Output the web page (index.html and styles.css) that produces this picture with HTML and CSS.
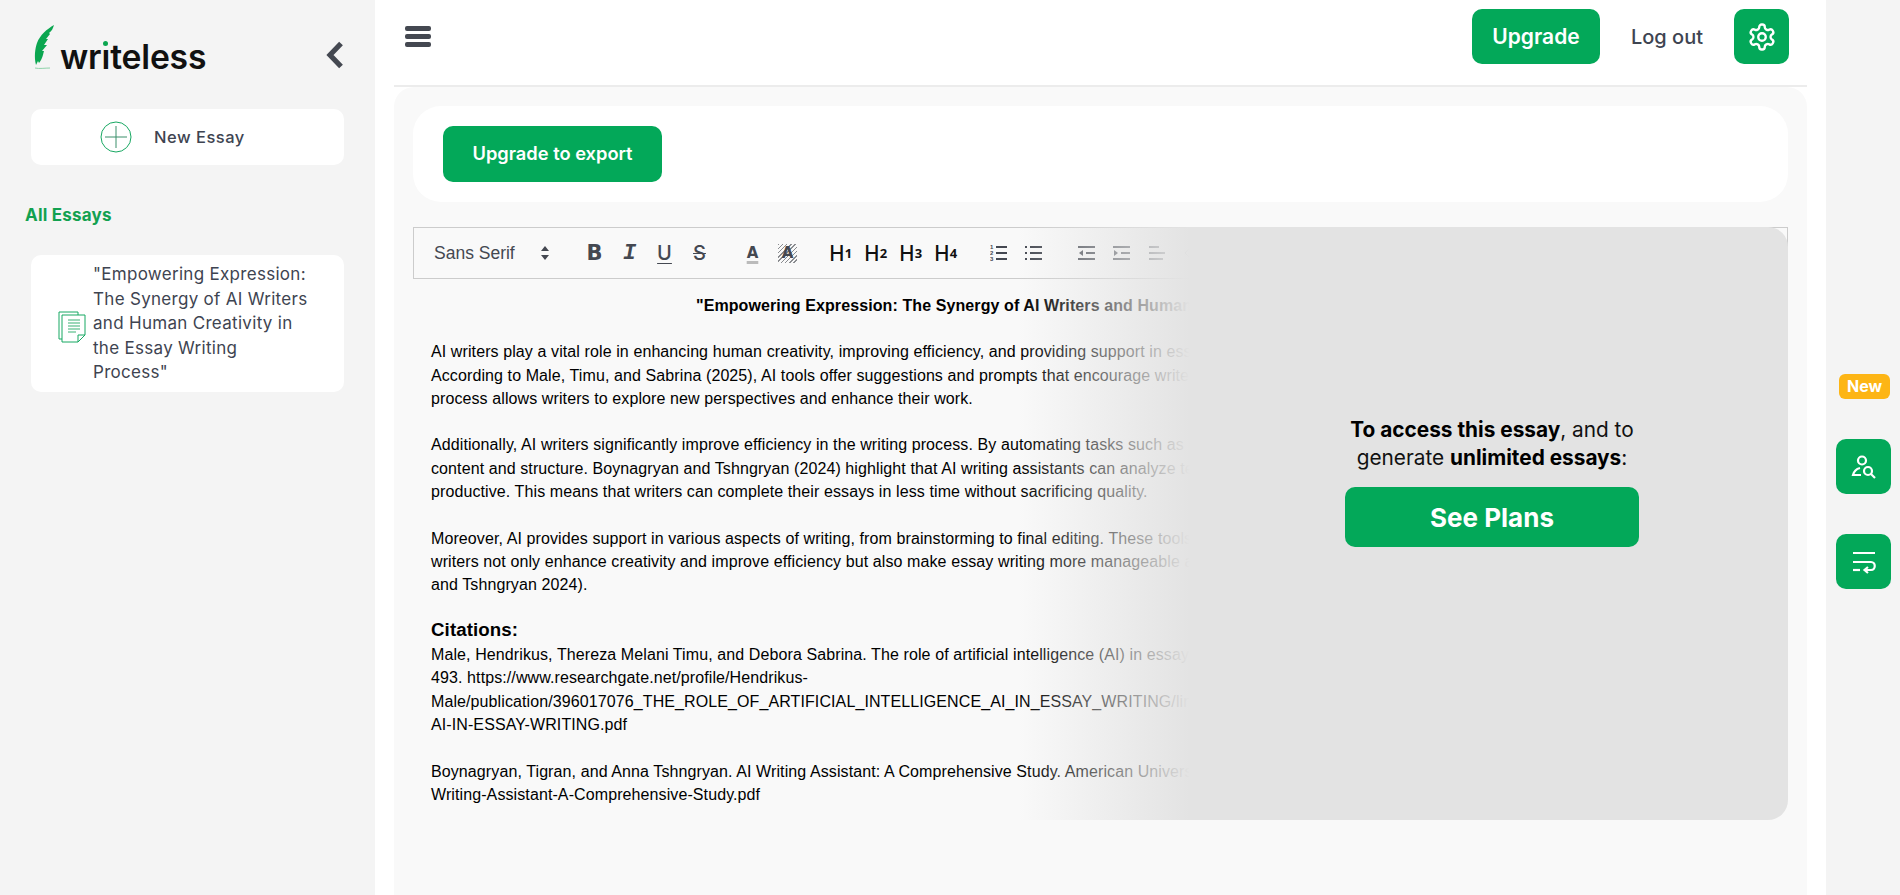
FILE: index.html
```html
<!DOCTYPE html>
<html lang="en">
<head>
  <meta charset="UTF-8">
  <title>Writeless</title>
  <link rel="stylesheet" href="styles.css">
</head>
<body>
  <aside class="sidebar">
    <div class="brand">
      <svg class="quill" viewBox="0 0 22 46" aria-hidden="true">
        <path d="M21 1C14 5 7 11 4 19C2 25 1 33 3 41L5 37L6 39C10 34 10 30 11 27L9 27L14 21L11 21L15 15L13 15L17 10L16 9C19 7 20 4 21 1Z" fill="#0ba650"/>
        <path d="M2 44C6 45 12 44 17 44" fill="none" stroke="#8fd3aa" stroke-width="1"/>
      </svg>
      <span class="wordmark">wr<span class="dot-i">ı</span>teless</span>
      <svg class="collapse" viewBox="0 0 18 26" aria-hidden="true">
        <path d="M15 1.5L4 13L15 24.5" fill="none" stroke="#444851" stroke-width="5.2"/>
      </svg>
    </div>

    <a class="new-essay">
      <svg class="plus" viewBox="0 0 32 32" aria-hidden="true">
        <circle cx="16" cy="16" r="15" fill="none" stroke="#17a862" stroke-width="1"/>
        <path d="M16 5V27M5 16H27" stroke="#3b8f6a" stroke-width="1"/>
      </svg>
      <span>New Essay</span>
    </a>

    <h3 class="all-essays">All Essays</h3>

    <a class="essay-item">
      <svg class="doc" viewBox="0 0 28 32" aria-hidden="true">
        <path d="M4 28H1V1H20V4" fill="none" stroke="#17a862" stroke-width="1"/>
        <path d="M4 4H27V24L20 31H4Z" fill="none" stroke="#17a862" stroke-width="1"/>
        <path d="M20 31V24H27" fill="none" stroke="#17a862" stroke-width="1"/>
        <path d="M10 9H22M10 12H22M10 15H22M10 18H22M10 21H18" stroke="#7ccca2" stroke-width="1.6"/>
      </svg>
      <span>"Empowering Expression: The Synergy of AI Writers and Human Creativity in the Essay Writing Process"</span>
    </a>
  </aside>

  <main class="main">
    <header class="topbar">
      <div class="burger"><i></i><i></i><i></i></div>
      <div class="top-actions">
        <a class="btn btn-upgrade">Upgrade</a>
        <a class="logout">Log out</a>
        <a class="btn btn-icon">
          <svg viewBox="0 0 24 24" width="30" height="30" fill="none" stroke="#fff" stroke-width="1.9">
            <path d="M12.22 2h-.44a2 2 0 0 0-2 2v.18a2 2 0 0 1-1 1.73l-.43.25a2 2 0 0 1-2 0l-.15-.08a2 2 0 0 0-2.73.73l-.22.38a2 2 0 0 0 .73 2.73l.15.1a2 2 0 0 1 1 1.72v.51a2 2 0 0 1-1 1.74l-.15.09a2 2 0 0 0-.73 2.73l.22.38a2 2 0 0 0 2.73.73l.15-.08a2 2 0 0 1 2 0l.43.25a2 2 0 0 1 1 1.73V20a2 2 0 0 0 2 2h.44a2 2 0 0 0 2-2v-.18a2 2 0 0 1 1-1.73l.43-.25a2 2 0 0 1 2 0l.15.08a2 2 0 0 0 2.73-.73l.22-.39a2 2 0 0 0-.73-2.73l-.15-.08a2 2 0 0 1-1-1.74v-.5a2 2 0 0 1 1-1.74l.15-.09a2 2 0 0 0 .73-2.73l-.22-.38a2 2 0 0 0-2.73-.73l-.15.08a2 2 0 0 1-2 0l-.43-.25a2 2 0 0 1-1-1.73V4a2 2 0 0 0-2-2z"/>
            <circle cx="12" cy="12" r="3"/>
          </svg>
        </a>
      </div>
    </header>

    <section class="panel">
      <div class="export-card">
        <a class="btn btn-export">Upgrade to export</a>
      </div>

      <div class="editor">
        <div class="toolbar">
          <div class="picker">
            <span>Sans Serif</span>
            <svg viewBox="0 0 10 16" width="10" height="16" aria-hidden="true">
              <path d="M5 1L9 6H1ZM5 15L1 10H9Z" fill="#444851"/>
            </svg>
          </div>
          <div class="tool-group">
            <span class="tool t-bold">B</span>
            <span class="tool t-italic">I</span>
            <span class="tool t-under">U</span>
            <span class="tool t-strike">S</span>
          </div>
          <div class="tool-group">
            <span class="tool t-color">A</span>
            <span class="tool t-bg"><em>A</em></span>
          </div>
          <div class="tool-group">
            <span class="tool t-head">H<sub>1</sub></span>
            <span class="tool t-head">H<sub>2</sub></span>
            <span class="tool t-head">H<sub>3</sub></span>
            <span class="tool t-head">H<sub>4</sub></span>
          </div>
          <div class="tool-group">
            <span class="tool">
              <svg viewBox="0 0 18 18" width="18" height="18">
                <path d="M6 3H17M6 9H17M6 15H17" stroke="#444851" stroke-width="2"/>
                <text x="0" y="5" class="num">1</text>
                <text x="0" y="11" class="num">2</text>
                <text x="0" y="17" class="num">3</text>
              </svg>
            </span>
            <span class="tool">
              <svg viewBox="0 0 18 18" width="18" height="18">
                <path d="M5 3H17M5 9H17M5 15H17" stroke="#444851" stroke-width="2"/>
                <path d="M0 3H2M0 9H2M0 15H2" stroke="#444851" stroke-width="2"/>
              </svg>
            </span>
          </div>
          <div class="tool-group">
            <span class="tool">
              <svg viewBox="0 0 18 18" width="18" height="18">
                <path d="M0 3H17M8 9H17M0 15H17" stroke="#444851" stroke-width="2"/>
                <path d="M5 6V12L1 9Z" fill="#444851"/>
              </svg>
            </span>
            <span class="tool">
              <svg viewBox="0 0 18 18" width="18" height="18">
                <path d="M0 3H17M8 9H17M0 15H17" stroke="#444851" stroke-width="2"/>
                <path d="M1 6V12L5 9Z" fill="#444851"/>
              </svg>
            </span>
            <span class="tool">
              <svg viewBox="0 0 18 18" width="18" height="18">
                <path d="M1 3H11M1 9H17M1 15H15" stroke="#444851" stroke-width="2"/>
              </svg>
            </span>
            <span class="tool">
              <svg viewBox="0 0 18 18" width="18" height="18">
                <path d="M6 5L2 9L6 13M12 5L16 9L12 13" fill="none" stroke="#444851" stroke-width="1"/>
              </svg>
            </span>
          </div>
        </div>

        <div class="doc-body">
          <h4 class="doc-title">"Empowering Expression: The Synergy of AI Writers and Human Creativity in the Essay Writing Process"</h4>
          <p>AI writers play a vital role in enhancing human creativity, improving efficiency, and providing support in essay writing.<br>
          According to Male, Timu, and Sabrina (2025), AI tools offer suggestions and prompts that encourage writers to think.<br>
          process allows writers to explore new perspectives and enhance their work.</p>
          <p>Additionally, AI writers significantly improve efficiency in the writing process. By automating tasks such as grammar checks,<br>
          content and structure. Boynagryan and Tshngryan (2024) highlight that AI writing assistants can analyze text quickly.<br>
          productive. This means that writers can complete their essays in less time without sacrificing quality.</p>
          <p class="last-para">Moreover, AI provides support in various aspects of writing, from brainstorming to final editing. These tools help writers.<br>
          writers not only enhance creativity and improve efficiency but also make essay writing more manageable and effective.<br>
          and Tshngryan 2024).</p>
          <h5 class="citations">Citations:</h5>
          <p>Male, Hendrikus, Thereza Melani Timu, and Debora Sabrina. The role of artificial intelligence (AI) in essay writing.<br>
          493. https://www.researchgate.net/profile/Hendrikus-<br>
          Male/publication/396017076_THE_ROLE_OF_ARTIFICIAL_INTELLIGENCE_AI_IN_ESSAY_WRITING/links/THE-ROLE<br>
          AI-IN-ESSAY-WRITING.pdf</p>
          <p>Boynagryan, Tigran, and Anna Tshngryan. AI Writing Assistant: A Comprehensive Study. American University of Armenia.<br>
          Writing-Assistant-A-Comprehensive-Study.pdf</p>
        </div>

        <div class="paywall">
          <div class="paywall-box">
            <p>
              <strong>To access this essay</strong>, and to<br>
              generate <strong>unlimited essays</strong>:
            </p>
            <a class="btn btn-plans">See Plans</a>
          </div>
        </div>
      </div>
    </section>
  </main>

  <aside class="rail">
    <span class="badge-new">New</span>
    <a class="btn btn-icon">
      <svg viewBox="0 0 26 26" width="26" height="26" fill="none" stroke="#fff" stroke-width="2.2">
        <circle cx="11" cy="6.5" r="4"/>
        <path d="M9 14C5 15 3 17 2 21H10"/>
        <circle cx="17" cy="17" r="4"/>
        <path d="M20 20L24 24"/>
      </svg>
    </a>
    <a class="btn btn-icon">
      <svg viewBox="0 0 26 26" width="26" height="26" fill="none" stroke="#fff" stroke-width="2.2">
        <path d="M2 4H24M2 13H20C25 13 25 21 20 21H14"/>
        <path d="M17 18L13.5 21L17 24"/>
        <path d="M2 21H9"/>
      </svg>
    </a>
  </aside>
</body>
</html>
```

FILE: styles.css
```css
* {
  box-sizing: border-box;
}

html, body {
  height: 100%;
}

body {
  margin: 0;
  display: flex;
  height: 895px;
  overflow: hidden;
  background: #fff;
  color: #3e4451;
  font-family: "Inter", "Noto Sans", sans-serif;
}

a {
  text-decoration: none;
}

/* left column */
.sidebar {
  width: 375px;
  flex: none;
  background: #f4f4f4;
  padding: 24px 31px 0 31px;
}

.brand {
  display: flex;
  align-items: flex-start;
  height: 85px;
}

.quill {
  width: 22px;
  height: 46px;
  flex: none;
  margin-left: 2px;
}

.wordmark {
  margin-left: 5px;
  margin-top: 13px;
  font-size: 33.7px;
  line-height: 40px;
  font-weight: 600;
  color: #111;
  letter-spacing: -0.2px;
}

.dot-i {
  position: relative;
}

.dot-i::after {
  content: "";
  position: absolute;
  left: 50%;
  top: 5px;
  width: 5px;
  height: 5px;
  margin-left: -2.5px;
  border-radius: 50%;
  background: #0ba650;
}

.collapse {
  width: 18px;
  height: 26px;
  margin-left: auto;
  margin-top: 18px;
  overflow: visible;
}

.new-essay {
  display: flex;
  align-items: center;
  gap: 22px;
  height: 56px;
  padding-left: 69px;
  border-radius: 10px;
  background: #fff;
  font-size: 16.5px;
  font-weight: 500;
  letter-spacing: 0.5px;
  color: #3e4451;
}

.plus {
  width: 32px;
  height: 32px;
}

.all-essays {
  margin: 38px 0 0 -6px;
  height: 52px;
  font-size: 17px;
  line-height: 24px;
  font-weight: 700;
  letter-spacing: 0.2px;
  color: #12a150;
}

.essay-item {
  display: flex;
  align-items: center;
  gap: 7px;
  height: 137px;
  padding: 0 33px 0 27px;
  border-radius: 10px;
  background: #fff;
  font-size: 17px;
  line-height: 24.5px;
  letter-spacing: 0.3px;
  color: #3e4451;
}

.doc {
  width: 28px;
  height: 32px;
  flex: none;
  margin-top: 6px;
}

/* middle column */
.main {
  flex: 1;
  min-width: 0;
  padding: 0 19px;
  display: flex;
  flex-direction: column;
}

.topbar {
  height: 87px;
  flex: none;
  border-bottom: 2px solid #ececec;
  display: flex;
  align-items: flex-start;
  justify-content: space-between;
}

.burger {
  margin: 26px 0 0 11px;
  width: 26px;
}

.burger i {
  display: block;
  height: 5px;
  margin-bottom: 3px;
  border-radius: 2px;
  background: #444851;
}

.top-actions {
  display: flex;
  align-items: center;
  margin: 9px 18px 0 0;
}

.btn {
  display: flex;
  align-items: center;
  justify-content: center;
  border-radius: 10px;
  background: #03a859;
  color: #fff;
  font-weight: 600;
}

.btn-upgrade {
  width: 128px;
  height: 55px;
  font-size: 21px;
}

.logout {
  width: 134px;
  text-align: center;
  font-size: 20px;
  font-weight: 500;
  color: #3e4451;
}

.btn-icon {
  width: 55px;
  height: 55px;
}

.panel {
  flex: 1;
  background: #f9f9f9;
  border-radius: 20px 20px 0 0;
  padding: 19px;
}

.export-card {
  height: 96px;
  padding: 20px 30px;
  border-radius: 28px;
  background: #fff;
}

.btn-export {
  width: 219px;
  height: 56px;
  padding-bottom: 2px;
  font-size: 18.3px;
}

.editor {
  position: relative;
  margin-top: 25px;
  height: 593px;
}

.toolbar {
  display: flex;
  align-items: center;
  height: 52px;
  border: 1px solid #ccc;
  padding-left: 20px;
  overflow: hidden;
}

.picker {
  width: 143px;
  flex: none;
  display: flex;
  align-items: center;
  justify-content: space-between;
  padding-right: 27px;
  font-family: "Liberation Sans", sans-serif;
  font-size: 17.5px;
  color: #444851;
}

.tool-group {
  display: flex;
  flex: none;
  margin-right: 18px;
}

.tool {
  width: 35px;
  height: 30px;
  display: flex;
  align-items: center;
  justify-content: center;
  color: #444851;
}

.t-bold {
  font: 700 21px "DejaVu Sans", sans-serif;
}

.t-italic {
  font: italic 700 22px "Liberation Mono", monospace;
}

.t-under {
  font: 500 20px "Inter", sans-serif;
  text-decoration: underline;
  text-underline-offset: 3px;
  text-decoration-thickness: 1px;
}

.t-strike {
  font: 500 20px "Inter", sans-serif;
  text-decoration: line-through;
  text-decoration-thickness: 1px;
}

.t-color {
  font: 700 15px "DejaVu Sans", sans-serif;
  text-decoration: underline;
  text-decoration-color: #bbb;
  text-decoration-thickness: 3px;
  text-underline-offset: 3px;
}

.t-bg em {
  width: 19px;
  height: 19px;
  text-align: center;
  font: 700 15px/19px "DejaVu Sans", sans-serif;
  background: repeating-linear-gradient(135deg, #8a8c90 0 1px, transparent 1px 3px);
}

.t-head {
  font: 500 21px "Noto Sans", sans-serif;
  color: #111;
}

.t-head sub {
  font-size: 13px;
  font-weight: 700;
  vertical-align: -2px;
}

.num {
  font: 700 6px "Liberation Sans", sans-serif;
  fill: #444851;
}

.doc-body {
  padding: 15px 18px 0;
  font-family: "Liberation Sans", sans-serif;
  font-size: 16px;
  letter-spacing: 0.1px;
  line-height: 23.3px;
  color: #000;
}

.doc-title {
  margin: 0 0 23px;
  text-align: center;
  white-space: nowrap;
  font-size: 16px;
  font-weight: 700;
}

.doc-body p {
  margin: 0 0 23.3px;
  white-space: nowrap;
}

.doc-body .last-para {
  margin-bottom: 19.5px;
}

.citations {
  margin: 0;
  font-size: 18.7px;
  line-height: 27px;
  font-weight: 700;
}

/* locked part of the essay */
.paywall {
  position: absolute;
  top: 0;
  left: 0;
  right: 0;
  bottom: 0;
  border-radius: 20px;
  background: linear-gradient(90deg, rgba(227, 227, 227, 0) 44%, #e3e3e3 56.5%);
  display: flex;
  justify-content: flex-end;
}

.paywall-box {
  width: 592px;
  padding-top: 189px;
  display: flex;
  flex-direction: column;
  align-items: center;
  color: #111;
}

.paywall-box p {
  margin: 0 0 15px;
  text-align: center;
  font-size: 20.8px;
  line-height: 28px;
}

.paywall-box strong {
  font-weight: 700;
  color: #000;
}

.btn-plans {
  width: 294px;
  height: 60px;
  font-size: 26px;
  font-weight: 700;
}

/* right column */
.rail {
  width: 74px;
  flex: none;
  background: #f4f4f4;
  padding: 374px 9px 0 10px;
  display: flex;
  flex-direction: column;
  align-items: center;
}

.badge-new {
  width: 51px;
  height: 25px;
  margin-bottom: 40px;
  margin-left: 2px;
  border-radius: 6px;
  background: #fdb515;
  color: #fff;
  text-align: center;
  font: 700 16px/25px "Inter", sans-serif;
}

.rail .btn-icon {
  margin-bottom: 40px;
}
```
